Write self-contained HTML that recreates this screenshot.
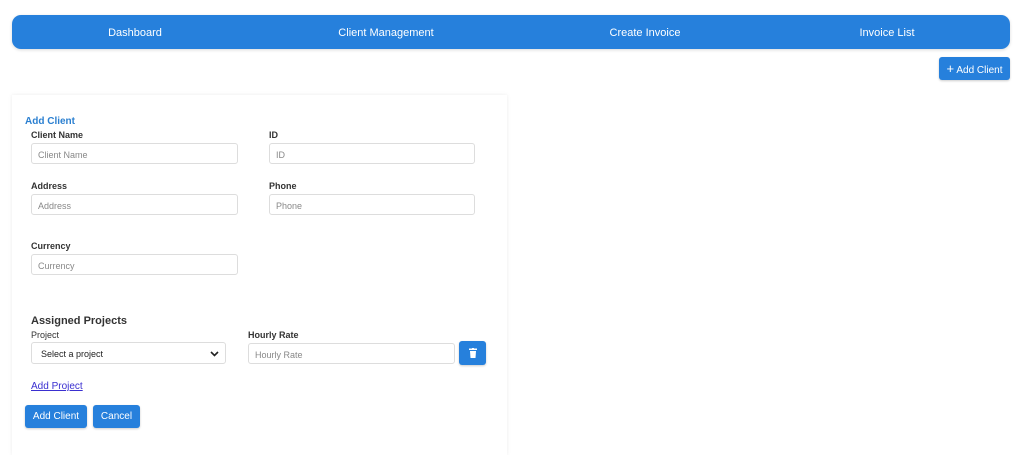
<!DOCTYPE html>
<html><head><style>
*{box-sizing:border-box;margin:0;padding:0}
body{width:1024px;height:446px;background:#fff;font-family:"Liberation Sans",sans-serif;position:relative;overflow:hidden;color:#222}
.nav{position:absolute;left:12px;top:15px;width:998px;height:34px;background:#2680dc;border-radius:9px;box-shadow:0 1px 3px rgba(0,0,0,.15)}
.nav span{position:absolute;top:12px;color:#fff;font-size:11px;transform:translateX(-50%)}
.btn{position:absolute;background:#2680dc;color:#fff;font-size:11px;border-radius:3px;text-align:center;box-shadow:0 1px 2px rgba(0,0,0,.2)}
.card{position:absolute;left:12px;top:95px;width:495px;height:360px;background:#fff;box-shadow:0 0 4px rgba(0,0,0,.08)}
.a{position:absolute}
.lbl{position:absolute;font-size:9px;font-weight:bold;color:#333}
.in{position:absolute;height:21px;border:1px solid #ddd;border-radius:3px;font-size:9px;color:#888;padding:6px 0 0 6px}
</style></head><body>
<div class="nav">
<span style="left:123px">Dashboard</span>
<span style="left:374px">Client Management</span>
<span style="left:633px">Create Invoice</span>
<span style="left:875px">Invoice List</span>
</div>
<div class="btn" style="left:939px;top:57px;width:71px;height:23px;line-height:23px;font-size:10px"><span style="font-size:13px">+</span> Add Client</div>
<div class="card"></div>
<div class="a" style="left:25px;top:116px;font-size:10px;font-weight:bold;color:#2a7fd0">Add Client</div>
<div class="lbl" style="left:31px;top:130px">Client Name</div>
<div class="in" style="left:31px;top:143px;width:207px">Client Name</div>
<div class="lbl" style="left:269px;top:130px">ID</div>
<div class="in" style="left:269px;top:143px;width:206px">ID</div>
<div class="lbl" style="left:31px;top:181px">Address</div>
<div class="in" style="left:31px;top:194px;width:207px">Address</div>
<div class="lbl" style="left:269px;top:181px">Phone</div>
<div class="in" style="left:269px;top:194px;width:206px">Phone</div>
<div class="lbl" style="left:31px;top:241px">Currency</div>
<div class="in" style="left:31px;top:254px;width:207px">Currency</div>
<div class="a" style="left:31px;top:315px;font-size:11px;font-weight:bold;color:#333">Assigned Projects</div>
<div class="lbl" style="left:31px;top:330px;font-weight:normal">Project</div>
<div class="in" style="left:31px;top:342px;width:195px;height:22px;color:#222;padding-left:9px;padding-top:6px">Select a project
<svg style="position:absolute;right:6px;top:8px" width="9" height="6" viewBox="0 0 9 6"><path d="M1 1l3.5 3.5L8 1" stroke="#222" stroke-width="1.6" fill="none"/></svg></div>
<div class="lbl" style="left:248px;top:330px">Hourly Rate</div>
<div class="in" style="left:248px;top:343px;width:207px">Hourly Rate</div>
<div class="btn" style="left:459px;top:341px;width:27px;height:24px">
<svg style="margin-top:7px" width="8" height="10" viewBox="0 0 8 10"><rect x="0" y="0.5" width="8" height="1.5" fill="#fff"/><rect x="3" y="0" width="2" height="1" fill="#fff"/><path d="M1 3h6l-.5 7h-5z" fill="#fff"/></svg></div>
<div class="a" style="left:31px;top:381px;font-size:10px;color:#3a2fd0;text-decoration:underline">Add Project</div>
<div class="btn" style="left:25px;top:405px;width:62px;height:23px;line-height:24px;font-size:10px">Add Client</div>
<div class="btn" style="left:93px;top:405px;width:47px;height:23px;line-height:24px;font-size:10px">Cancel</div>
</body></html>
